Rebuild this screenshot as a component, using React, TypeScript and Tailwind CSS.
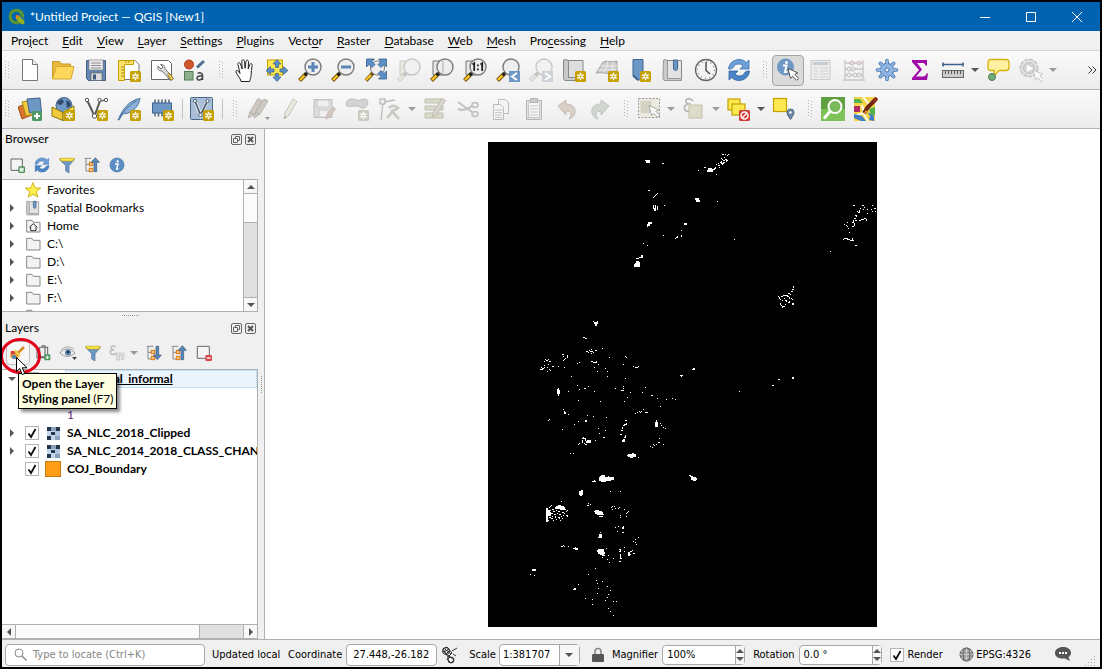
import type { ReactNode } from "react";

type Rect = [number, number, number?, number?];

/* ---------- small shared pieces ---------- */

function Svg({ children, size = 24, className = "" }: { children: ReactNode; size?: number; className?: string }) {
  return (
    <svg width={size} height={size} viewBox="0 0 24 24" fill="none" className={`shrink-0 ${className}`} aria-hidden="true">
      {children}
    </svg>
  );
}

function Star({ x = 13, y = 13, off = false }: { x?: number; y?: number; off?: boolean }) {
  return (
    <g transform={`translate(${x} ${y})`}>
      <rect width="11" height="11" rx="1.5" fill={off ? "#c9c9bd" : "#c4a000"} />
      <path d="M5.5 1.8v7.4M2.3 3.6l6.4 3.8M2.3 7.4l6.4-3.8" stroke="#fff" strokeWidth="1.6" />
      <circle cx="5.5" cy="5.5" r="1" fill={off ? "#c9c9bd" : "#c4a000"} />
    </g>
  );
}

function Pointer({ x, y, fill = "#fff", stroke = "#555" }: { x: number; y: number; fill?: string; stroke?: string }) {
  return (
    <path
      transform={`translate(${x} ${y})`}
      d="M0 0l2.5 10 2.3-2.2 3.8 4 2-2-3.8-3.9 3-1.6z"
      fill={fill}
      stroke={stroke}
      strokeLinejoin="round"
    />
  );
}

function Lens({ children, off = false, back = false }: { children?: ReactNode; off?: boolean; back?: boolean }) {
  return (
    <Svg>
      {back && <path d="M3 3h10v14H3z" fill={off ? "#e9e9dd" : "#e6e6e6"} stroke={off ? "#ccc" : "#777"} />}
      <path d="M8.5 15.5L1.5 22.500" stroke={off ? "#ccc" : "#6b5312"} strokeWidth="4" />
      <path d="M7 17L2 22" stroke={off ? "#e8e8e0" : "#ffc423"} strokeWidth="2.400" />
      <path d="M9.500 14.500l-3 3" stroke={off ? "#c4c4c4" : "#222"} strokeWidth="3" />
      <circle cx="15" cy="9" r="8" fill={off ? "#f1f1f1" : "#eee"} stroke={off ? "#c8c8c8" : "#7b7d7c"} strokeWidth="1.4" />
      {children}
    </Svg>
  );
}

function Sync({ size = 24 }: { size?: number }) {
  return (
    <Svg size={size}>
      <path d="M1.500 11C2 5 7 1.500 12 1.500c3 0 5.500 1 7.200 3L22 2v9h-9l3-3c-2.500-3-8-2.500-9.500 1-.8 1.700-2.500 2-5 2z" fill="#6d9fd6" stroke="#3d74b5" strokeWidth=".8" />
      <path d="M22.500 13c-.5 6-5.500 9.500-10.500 9.500-3 0-5.500-1-7.200-3L2 22v-9h9l-3 3c2.500 3 8 2.500 9.500-1 .8-1.700 2.500-2 5-2z" fill="#4a85c6" stroke="#2f65a5" strokeWidth=".8" />
    </Svg>
  );
}

function Info({ size = 24 }: { size?: number }) {
  return (
    <Svg size={size}>
      <circle cx="12" cy="12" r="10.500" fill="#5c8dc4" stroke="#45719f" />
      <circle cx="13" cy="6.500" r="1.800" fill="#fff" />
      <path d="M9 10.500h4.500L11.500 18h2.500" stroke="#fff" strokeWidth="2.200" />
    </Svg>
  );
}

function Funnel() {
  return (
    <Svg size={16}>
      <path d="M1 4h22l-8 9v11l-5-3v-8z" fill="#6d97c4" stroke="#4b6f9b" />
      <path d="M1 2h22l-2 4H3z" fill="#fce94f" stroke="#c4a000" />
    </Svg>
  );
}

function TreeArrows({ up = false }: { up?: boolean }) {
  return (
    <Svg size={16}>
      <path d="M1 2h10M3 2v19h6M3 11h6" stroke="#888" strokeWidth="1.500" />
      <rect x="8" y="8" width="5" height="5" fill="#f6c48a" stroke="#e07a10" strokeWidth="1.500" />
      <rect x="8" y="17" width="5" height="5" fill="#f6c48a" stroke="#e07a10" strokeWidth="1.500" />
      {up ? (
        <path d="M17 1l6 7h-4v14h-4V8h-4z" fill="#5a86b8" stroke="#355880" />
      ) : (
        <path d="M17 22l6-7h-4V2h-4v13h-4z" fill="#5a86b8" stroke="#355880" />
      )}
    </Svg>
  );
}

function Tri({ dir = "down", color = "#555" }: { dir?: "down" | "up" | "left" | "right"; color?: string }) {
  const d = { down: "M0 2h8L4 6z", up: "M0 6h8L4 2z", left: "M6 0v8L2 4z", right: "M2 0v8l4-4z" }[dir];
  return (
    <svg width="8" height="8" viewBox="0 0 8 8" className="shrink-0" aria-hidden="true">
      <path d={d} fill={color} />
    </svg>
  );
}

/* ---------- toolbar icons ---------- */

const NewFile = (
  <Svg>
    <path d="M4.500 1.500h10l5 5v16h-15z" fill="#fff" stroke="#777" />
    <path d="M14.500 1.500v5h5" fill="#eee" stroke="#777" />
  </Svg>
);
const OpenFolder = (
  <Svg>
    <path d="M1.500 20.500v-17h7l2 2.500h9v3" fill="#e8b93c" stroke="#c79a2a" />
    <path d="M1.500 21L5.500 8.500h17.500L20 21z" fill="#ffd75a" stroke="#d9a92f" />
  </Svg>
);
const Save = (
  <Svg>
    <path d="M2.500 2.500h19v20h-17l-2-2z" fill="#6488b3" stroke="#435f80" />
    <rect x="5" y="2" width="14" height="10" fill="#eee" stroke="#777" strokeWidth=".6" />
    <path d="M7 5h10M7 7.500h10M7 10h10" stroke="#888" />
    <rect x="7" y="15" width="11" height="7.500" fill="#ddd" stroke="#555" strokeWidth=".6" />
    <rect x="9" y="16.500" width="3" height="5" fill="#3d5b80" />
  </Svg>
);
const NewLayout = (
  <Svg>
    <path d="M4 2.500h14l4 4v15H4z" fill="#fff" stroke="#777" />
    <path d="M1.500 2.500h15v4h-9v16h-6z" fill="#fce26a" stroke="#c4a000" />
    <path d="M4 9h3M4 12h3M4 15h3M4 18h3M9 3v2M12 3v2" stroke="#a68800" />
    <Star />
  </Svg>
);
const LayoutManager = (
  <Svg>
    <path d="M1.500 2.500h17l3 3v16h-20z" fill="#fff" stroke="#666" />
    <path d="M8 8c-1 3 1 5 4 5l8.500 9.500 2.500-2-8-10c0-3-2-4.500-4.500-4l2.500 2.500-2 2z" fill="#ddd" stroke="#777" />
    <path d="M17.500 16.500l3.500 6 2.500-2-4.500-5.500z" fill="#f2cf65" stroke="#8d7427" />
  </Svg>
);
const StyleManager = (
  <Svg>
    <circle cx="6" cy="6.500" r="4.500" fill="#d2562b" stroke="#a33b18" />
    <path d="M14 9.500L21 3" stroke="#4f6f94" strokeWidth="3" />
    <rect x="1.500" y="13.500" width="8.500" height="8.500" fill="#8fb08c" stroke="#527c50" />
    <path d="M14.500 15.500c1.500-1 5-1 5 1.500v5M19.500 18c-3-.5-5.500.5-5.500 2.300 0 2.200 4 2.200 5.500-.3" stroke="#444" strokeWidth="1.500" />
  </Svg>
);
const Hand = (
  <Svg>
    <path
      d="M9 23.500c-.5-4-3.500-5-5-9.500-.5-1.600 1.500-2 2.300-.8L8 15.500 6 6.500c-.4-2 1.800-2.500 2.400-.7L10.200 11 9.800 3.300c0-2 2.500-2 2.700 0l.6 7L14 3.500c.3-1.900 2.600-1.600 2.500.3L16.200 11l1.600-4.500c.7-1.700 2.700-1 2.300.9-.7 3.500-.8 7-1 10-.2 2.600-1.100 3.600-1.400 6.100z"
      fill="#fff"
      stroke="#222"
      strokeLinejoin="round"
    />
  </Svg>
);
const PanSelection = (
  <Svg>
    <rect x="2.500" y="2" width="15" height="15" fill="#fce94f" stroke="#c4a000" />
    <path
      d="M12 1.500l4 4.500h-2.500v3.500h-3V6H8zM12 23.500l4-4.500h-2.500v-3.500h-3V19H8zM1 12.500l4.500-4V11H9v3H5.500v2.500zM23 12.500l-4.500-4V11H15v3h3.500v2.500z"
      fill="#5a8fc8"
      stroke="#3a608c"
      strokeWidth=".7"
    />
  </Svg>
);
const ZoomIn = (
  <Lens>
    <path d="M15 4v10M10 9h10" stroke="#5b86b8" strokeWidth="3" />
  </Lens>
);
const ZoomOut = (
  <Lens>
    <path d="M10 9h10" stroke="#5b86b8" strokeWidth="3" />
  </Lens>
);
const ZoomFull = (
  <Svg>
    <path d="M9 15l-7 7.500" stroke="#6b5312" strokeWidth="4" />
    <path d="M7 17l-5 5" stroke="#ffc423" strokeWidth="2.400" />
    <circle cx="13.500" cy="10" r="7" fill="#eee" stroke="#777" />
    <path
      d="M2.500 1h8L8 3.500l3 3-3 3-3-3L2.500 9zM22.500 1h-8L17 3.500l-3 3 3 3 3-3L22.500 9zM22.500 21h-8l2.500-2.500-3-3 3-3 3 3 2.500-2.500z"
      fill="#5a8fc8"
      stroke="#3a608c"
      strokeWidth=".8"
    />
  </Svg>
);
const ZoomSelection = <Lens off back />;
const ZoomLayer = (
  <Lens back>
    <path d="M13 3v12" stroke="#aaa" />
  </Lens>
);
const ZoomNative = (
  <Lens back>
    <path d="M9.500 6.500l1.700-1.200V13M17.500 6.500l1.700-1.200V13" stroke="#222" strokeWidth="1.800" />
    <path d="M14 6.500h1.800v1.800H14zM14 10.500h1.800v1.800H14z" fill="#222" />
  </Lens>
);
const ZoomLast = (
  <Lens>
    <rect x="13" y="13" width="11" height="11" fill="#6d97c4" />
    <path d="M21 15l-5 3.500 5 3.500" stroke="#fff" strokeWidth="2" />
  </Lens>
);
const ZoomNext = (
  <Lens off>
    <rect x="13" y="13" width="11" height="11" fill="#ccd2d8" />
    <path d="M16 15l5 3.500-5 3.500" stroke="#fff" strokeWidth="2" />
  </Lens>
);
const NewMapView = (
  <Svg>
    <path d="M5 2.500h16v17H5z" fill="#dedede" stroke="#888" />
    <path d="M1.500 2c3-1 5 0 5 2v15.500H21v3H4c-2 0-2.500-1-2.500-3z" fill="#c9c9c9" stroke="#888" />
    <Star />
  </Svg>
);
const New3d = (
  <Svg>
    <path d="M1 15C4 11 6 7 8 4c4-2 8 1 14-1v12c-7 2-12-1-21 0z" fill="#ccc" stroke="#a5a5a5" />
    <path d="M6 8c6-1 10 1.500 16-.5M3.500 12c7-1 11 1 18-1M13 3.500c-1 4-2 7-4 11M18 4l-2 12" stroke="#eee" />
    <Star />
  </Svg>
);
const NewBookmark = (
  <Svg>
    <path d="M5 1.500h10v17l-4 4-6-5z" fill="#6d97c4" stroke="#3f648e" />
    <path d="M5 17.500l5 4.500" stroke="#3f648e" strokeWidth="2" />
    <Star x={12} />
  </Svg>
);
const Bookmarks = ({ size = 24 }: { size?: number }) => (
  <Svg size={size}>
    <path d="M3.500 2.500h17v18h-17z" fill="#e2e2e2" stroke="#888" />
    <path d="M2.500 2c2-1 4 0 4 2v16.500h14v2H4c-1.500 0-2-1-2-3z" fill="#cacaca" stroke="#999" />
    <path d="M12.500 2h4v9l-2 2-2-2z" fill="#6d97c4" stroke="#3f648e" />
  </Svg>
);
const Clock = (
  <Svg>
    <circle cx="12" cy="12" r="10.500" fill="#f4f4f4" stroke="#666" strokeWidth="1.300" />
    <circle cx="12" cy="12" r="8.500" stroke="#888" strokeWidth="1.500" strokeDasharray="1 3.450" />
    <path d="M12 4v8.500l4 3.500" stroke="#444" strokeWidth="1.400" />
  </Svg>
);
const Identify = (
  <Svg>
    <circle cx="9.500" cy="9" r="8.500" fill="#6d97c4" />
    <circle cx="10.500" cy="4.500" r="1.500" fill="#fff" />
    <path d="M7 7.500h3.500L9 14h2.500" stroke="#fff" strokeWidth="2" />
    <Pointer x={12} y={10.500} />
  </Svg>
);
const Table = (
  <Svg>
    <rect x="2" y="2.500" width="19" height="19" fill="#ececec" stroke="#ccc" />
    <path d="M4 5.500h15" stroke="#c4cdd6" strokeWidth="3" />
    <path d="M5 10h4M5 13h4M5 16h4M5 19h4M11 10h8M11 13h8M11 16h8M11 19h8" stroke="#d0d0d0" />
  </Svg>
);
const Abacus = (
  <Svg>
    <path d="M3 2v19M21 2v19M1 22h22M3 5h18M3 11h18M3 17h18" stroke="#c6c6c6" strokeWidth="1.300" />
    <g fill="#eee" stroke="#c0c0c0">
      <circle cx="10" cy="5" r="2" fill="#efd9d9" />
      <circle cx="17" cy="5" r="2" fill="#efd9d9" />
      <circle cx="7" cy="11" r="2" />
      <circle cx="11" cy="11" r="2" />
      <circle cx="7" cy="17" r="2" />
      <circle cx="13" cy="17" r="2" />
      <circle cx="17" cy="17" r="2" />
    </g>
  </Svg>
);
const Gear = (
  <Svg>
    <g stroke="#4a78b0" strokeWidth="3.600" strokeLinecap="round">
      <path d="M12 2.500v19M2.500 12h19M5.300 5.300l13.400 13.400M18.700 5.300L5.300 18.700" />
    </g>
    <circle cx="12" cy="12" r="7.200" fill="#4a78b0" />
    <g stroke="#8db4e2" strokeWidth="2" strokeLinecap="round">
      <path d="M12 2.500v19M2.500 12h19M5.300 5.300l13.400 13.400M18.700 5.300L5.300 18.700" />
    </g>
    <circle cx="12" cy="12" r="6.200" fill="#8db4e2" />
    <circle cx="12" cy="12" r="2" fill="#eee" stroke="#4a78b0" />
  </Svg>
);
const Sigma = (
  <Svg>
    <path d="M4 2h15v5.500h-1.500C17 5.500 16 5 14 5H9l5 6.500L8 18.500h7c2 0 3-1 3.500-3H20L19 22H4v-2l7-8-7-8z" fill="#a00aa8" />
  </Svg>
);
const Ruler = (
  <Svg>
    <path d="M2 6.500h20M2 4.500v4M22 4.500v4" stroke="#3d5f88" strokeWidth="1.600" />
    <rect x="1.500" y="12.500" width="21" height="7" fill="#ccc" stroke="#666" />
    <path d="M4.500 13v3M7.500 13v3M10.500 13v3M13.500 13v3M16.500 13v3M19.500 13v3" stroke="#555" />
  </Svg>
);
const MapTips = (
  <Svg>
    <path d="M5 1.500h15c2 0 3 1 3 3v5c0 2-1 3-3 3h-7L7 19l1.500-6.500H5c-2 0-3-1-3-3v-5c0-2 1-3 3-3z" fill="#fdf0a0" stroke="#d4b106" strokeWidth="1.300" />
    <circle cx="6" cy="19" r="3.500" fill="#6fae7a" stroke="#4a7c52" />
  </Svg>
);
const Actions = (
  <Svg>
    <circle cx="10" cy="10" r="8.500" fill="#e6e6e6" stroke="#c8c8c8" strokeWidth="2" strokeDasharray="4 1" />
    <circle cx="10" cy="10" r="5.500" fill="#d6d6d6" stroke="#bbb" />
    <path d="M8 7l6 3.500-6 3.500z" fill="#fff" />
    <Pointer x={14} y={12} fill="#f8f8f8" stroke="#c4c4c4" />
  </Svg>
);

/* second row */
const DataSource = (
  <Svg>
    <path d="M0 10l9-4 5 12-10 4z" fill="#d8742f" stroke="#a3521a" />
    <path d="M4 5l10-2 4 14-10 2z" fill="#f0c93c" stroke="#a98a10" />
    <path d="M9 2l13-1 1.500 14-12 1z" fill="#6d97c4" stroke="#3f648e" />
    <rect x="14" y="14" width="10" height="10" rx="1.500" fill="#4f9a63" />
    <path d="M19 16v6M16 19h6" stroke="#fff" strokeWidth="2" />
  </Svg>
);
const Geopackage = (
  <Svg>
    <circle cx="13" cy="8.500" r="8" fill="#6d97c4" stroke="#3f5f83" />
    <path d="M7 4l4-2 2 3-3 3-4-1zM15 3l4 2 1 4-4 2z" fill="#324d6c" />
    <path d="M1 10l11 5.500v8L1 19z" fill="#f0c93c" stroke="#8b7209" />
    <path d="M12 15.500L23 9v9l-11 5.500z" fill="#fce94f" stroke="#8b7209" />
    <Star />
  </Svg>
);
const Shapefile = (
  <Svg>
    <path d="M3 3l7.500 16L16 4" stroke="#555" strokeWidth="2" />
    <path d="M16 4c2 1 4-2 6-1" stroke="#555" strokeWidth="1.300" />
    <g fill="#fff" stroke="#555">
      <circle cx="3" cy="3" r="1.700" />
      <circle cx="15.500" cy="3" r="1.700" />
      <circle cx="22" cy="3" r="1.700" />
      <circle cx="10.500" cy="19" r="2.200" />
    </g>
    <Star />
  </Svg>
);
const Spatialite = (
  <Svg>
    <path d="M1 23C6 11 13 3 23 1.500 22 7 19 13 11 16c-3 1-5 0-6 2l-3 5z" fill="#8cb0d8" stroke="#47719f" />
    <path d="M3 20C8 12 14 7 20 3.500" stroke="#47719f" />
    <Star />
  </Svg>
);
const TempLayer = (
  <Svg>
    <path d="M5 2.500v17M8.500 2.500v17M12 2.500v17M15.500 2.500v17M19 2.500v17" stroke="#567" strokeWidth="1.500" />
    <rect x="2.500" y="6" width="19" height="10" fill="#6d97c4" stroke="#3f648e" />
    <Star />
  </Svg>
);
const VirtualLayer = (
  <Svg>
    <rect x=".5" y=".500" width="22" height="22" rx="1" fill="#a9bfd8" stroke="#4b6787" />
    <path d="M5 4l5.500 14L17 5" stroke="#e8eef5" strokeWidth="3.500" />
    <path d="M5 4l5.500 14L17 5" stroke="#4b5d72" strokeWidth="1.700" />
    <g fill="#fff" stroke="#4b5d72">
      <circle cx="5" cy="4" r="1.600" />
      <circle cx="17.500" cy="4" r="1.600" />
      <circle cx="10.500" cy="18" r="1.800" />
    </g>
    <Star />
  </Svg>
);
const Pencils = (
  <Svg>
    <path d="M2 21l2-6L12 1.500l4 2L8 18zM8 21l2-6 8-13 4 2-8 13z" fill="#cfc9c4" stroke="#b9b4ae" />
    <path d="M4 15l4 3M10 15l4 3" stroke="#b0aaa5" />
    <path d="M19 20h5l-2.500 3z" fill="#999" />
  </Svg>
);
const Pencil = (
  <Svg>
    <path d="M5 22l1-6L14 2l4 2.500L10 18z" fill="#e8e8dc" stroke="#c6c6bc" />
    <path d="M5 22l3-2-2-1z" fill="#aaa" />
  </Svg>
);
const SaveEdits = (
  <Svg>
    <rect x="2" y="2.500" width="18" height="18" fill="#dcdcdc" stroke="#c0c0c0" />
    <path d="M5 3h12v7H5zM7 13h9v7H7z" fill="#efefef" stroke="#ccc" />
    <path d="M14 22l1-4 6-8 2.500 2-6 8z" fill="#d9c9c5" stroke="#c3b5b1" />
  </Svg>
);
const AddPolygon = (
  <Svg>
    <path d="M1 7c0-5 6-6 10-4 3 1 5 0 8-1 5-1 5 7 0 9-3 1-4-2-7-2-5 0-11 2-11-2z" fill="#d3d3d3" stroke="#bdbdbd" />
    <Star off />
  </Svg>
);
const VertexTool = (
  <Svg>
    <path d="M3 23L5 5l12-2" stroke="#bbb" strokeWidth="1.300" />
    <rect x="2" y="2" width="5" height="5" fill="#eee" stroke="#aaa" />
    <path d="M9 21l8-9M11 11c2-3 6-3 9 0l-3 2M13 13l8 9" stroke="#c9c9c2" strokeWidth="2.600" />
  </Svg>
);
const ModifyAttrs = (
  <Svg>
    <path d="M2 2h18v4H2zM2 9h18v4H2zM2 16h18v5H2z" fill="#dadacb" stroke="#bfbfae" />
    <path d="M9 20l2-6L19 1.500l3.500 2L14 17z" fill="#dcd6d2" stroke="#bfb9b4" />
  </Svg>
);
const Cut = (
  <Svg>
    <path d="M2 5l14 10M2 12c5 2 9 1 14-3" stroke="#c2c2c2" strokeWidth="2" />
    <ellipse cx="19" cy="17" rx="3" ry="2.300" stroke="#c2c2c2" strokeWidth="1.700" />
    <ellipse cx="19" cy="8" rx="3" ry="2.300" stroke="#c2c2c2" strokeWidth="1.700" />
  </Svg>
);
const Copy = (
  <Svg>
    <path d="M9.500 2.500h7l3 3v11h-10z" fill="#f4f4f4" stroke="#bcbcbc" />
    <path d="M4.500 7.500h7l3 3v12h-10z" fill="#f4f4f4" stroke="#bcbcbc" />
    <path d="M6 13h7M6 15.500h7M6 18h7M6 20.500h7" stroke="#c8c8c8" />
  </Svg>
);
const Paste = (
  <Svg>
    <path d="M4.500 3.500h15v19h-15z" fill="#e2e2dc" stroke="#b5b5b5" />
    <path d="M7.500 5.500h9l1 1v14h-11v-15z" fill="#f6f6f6" stroke="#c4c4c4" />
    <path d="M8.500 1.500h7v4h-7z" fill="#ccc" stroke="#b5b5b5" />
    <path d="M8 9h8M8 12h8M8 15h8M8 18h8" stroke="#c8c8c8" />
  </Svg>
);
const Undo = ({ flip = false }: { flip?: boolean }) => (
  <Svg className={flip ? "-scale-x-100" : ""}>
    <path d="M3 9l8-6v4c7 0 10 4 9 9-.5 3-3 5-6 6 3-4 3-8-3-8v4z" fill={flip ? "#d0d6d0" : "#dacfc6"} stroke={flip ? "#bec4be" : "#c9bdb3"} />
  </Svg>
);
const SelectArea = (
  <Svg>
    <rect x="1.500" y="1.500" width="21" height="19" fill="#eceadf" stroke="#999" strokeDasharray="2 1.500" />
    <rect x="3.500" y="4" width="11" height="12" fill="#d4d2c3" />
    <Pointer x={12} y={8.500} fill="#fafafa" stroke="#aaa" />
  </Svg>
);
const SelectExpr = (
  <Svg>
    <path d="M11 4C8 0 3 2 4 5c.5 2 3 2 4.500 1.700C4 7 1.500 9 2.500 12c1 3 6 3 8.500 0" stroke="#bbb" strokeWidth="1.800" />
    <rect x="7" y="8" width="13" height="13" fill="#dddcc8" stroke="#c2c1ac" />
  </Svg>
);
const Deselect = (
  <Svg>
    <rect x="1" y="2" width="12" height="11" fill="#fce94f" stroke="#c4a000" strokeWidth="1.200" />
    <rect x="5" y="7" width="13" height="11" fill="#fce94f" stroke="#c4a000" strokeWidth="1.200" />
    <rect x="12" y="13" width="11" height="11" rx="1.500" fill="#d33a3a" />
    <circle cx="17.500" cy="18.500" r="3.500" stroke="#fff" strokeWidth="1.500" />
    <path d="M15 21l5-5" stroke="#fff" strokeWidth="1.500" />
  </Svg>
);
const SelectLocation = (
  <Svg>
    <rect x="1.500" y="1.500" width="13" height="13" fill="#fce94f" stroke="#c4a000" strokeWidth="1.200" />
    <path d="M18.500 22.500c-2.500-4-3.500-5-3.500-7a3.500 3.500 0 017 0c0 2-1 3-3.500 7z" fill="#6d8aa6" stroke="#50697f" />
    <circle cx="18.500" cy="15.500" r="1.200" fill="#fff" />
  </Svg>
);
const SearchPlugin = (
  <Svg>
    <rect width="24" height="24" fill="#7fc257" />
    <path d="M0 0h24v12H0z" fill="#5f9f40" />
    <circle cx="14" cy="9.500" r="6.500" fill="#7cb85c" stroke="#fff" strokeWidth="2" />
    <path d="M9 14.500L3 21.500" stroke="#fff" strokeWidth="3" />
  </Svg>
);
const OsmPlugin = (
  <Svg>
    <rect width="21" height="24" fill="#f4d548" />
    <path d="M0 2h6l3 4H0zM15 12l6-2v8l-4 1z" fill="#56b04c" />
    <path d="M0 9h6v6H0z" fill="#b02864" />
    <path d="M9 0l6 7 4-4M0 19l9-3 5 8M8 8l2 8" stroke="#fff" strokeWidth="1.800" />
    <path d="M0 17l8 2 4 5H7l-7-3zM13 15l3 4-1 4 5 1v-5z" fill="#3f7ecb" />
    <path d="M10 16l4-6 7-7" stroke="#6d2413" strokeWidth="4" />
    <path d="M19 5l4-4" stroke="#8c3117" strokeWidth="4" />
    <path d="M9 17l3-4 2 2z" fill="#e6972b" />
  </Svg>
);

/* ---------- toolbars ---------- */

type Item =
  | "handle"
  | "sep"
  | { name: string; icon: ReactNode; menu?: boolean; dim?: boolean; active?: boolean };

const mainTools: Item[] = [
  { name: "New Project", icon: NewFile },
  { name: "Open Project", icon: OpenFolder },
  { name: "Save Project", icon: Save },
  { name: "New Print Layout", icon: NewLayout },
  { name: "Layout Manager", icon: LayoutManager },
  { name: "Style Manager", icon: StyleManager },
  "handle",
  { name: "Pan Map", icon: Hand },
  { name: "Pan to Selection", icon: PanSelection },
  { name: "Zoom In", icon: ZoomIn },
  { name: "Zoom Out", icon: ZoomOut },
  { name: "Zoom Full", icon: ZoomFull },
  { name: "Zoom to Selection", icon: ZoomSelection },
  { name: "Zoom to Layer", icon: ZoomLayer },
  { name: "Zoom to Native Resolution", icon: ZoomNative },
  { name: "Zoom Last", icon: ZoomLast },
  { name: "Zoom Next", icon: ZoomNext },
  { name: "New Map View", icon: NewMapView },
  { name: "New 3D Map View", icon: New3d },
  { name: "New Spatial Bookmark", icon: NewBookmark },
  { name: "Show Spatial Bookmarks", icon: <Bookmarks /> },
  { name: "Temporal Controller", icon: Clock },
  { name: "Refresh", icon: <Sync /> },
  "handle",
  { name: "Identify Features", icon: Identify, active: true },
  { name: "Open Attribute Table", icon: Table },
  { name: "Field Calculator", icon: Abacus },
  { name: "Toolbox", icon: Gear },
  { name: "Statistical Summary", icon: Sigma },
  { name: "Measure", icon: Ruler, menu: true },
  { name: "Map Tips", icon: MapTips },
  { name: "Run Feature Action", icon: Actions, menu: true, dim: true },
];

const editTools: Item[] = [
  { name: "Data Source Manager", icon: DataSource },
  { name: "New GeoPackage Layer", icon: Geopackage },
  { name: "New Shapefile Layer", icon: Shapefile },
  { name: "New SpatiaLite Layer", icon: Spatialite },
  { name: "New Temporary Scratch Layer", icon: TempLayer },
  "sep",
  { name: "New Virtual Layer", icon: VirtualLayer },
  "sep",
  "handle",
  { name: "Current Edits", icon: Pencils },
  { name: "Toggle Editing", icon: Pencil },
  { name: "Save Layer Edits", icon: SaveEdits },
  { name: "Add Polygon Feature", icon: AddPolygon },
  { name: "Vertex Tool", icon: VertexTool, menu: true, dim: true },
  { name: "Modify Attributes", icon: ModifyAttrs },
  { name: "Cut Features", icon: Cut },
  { name: "Copy Features", icon: Copy },
  { name: "Paste Features", icon: Paste },
  { name: "Undo", icon: <Undo /> },
  { name: "Redo", icon: <Undo flip /> },
  "handle",
  { name: "Select Features", icon: SelectArea, menu: true, dim: true },
  { name: "Select by Expression", icon: SelectExpr, menu: true, dim: true },
  { name: "Deselect Features", icon: Deselect, menu: true },
  { name: "Select by Location", icon: SelectLocation },
  "handle",
  { name: "Search Layers", icon: SearchPlugin },
  { name: "OSM Place Search", icon: OsmPlugin },
];

function Handle() {
  return (
    <div className="flex w-[15px] shrink-0 justify-center pl-1">
      <svg width="5" height="18" aria-hidden="true">
        {[0, 3, 6, 9, 12, 15].map((y) => (
          <path key={y} d={`M0 ${y}h1v1h-1zM3 ${y + 1}h1v1h-1z`} fill="#b5b5b5" />
        ))}
      </svg>
    </div>
  );
}

function Toolbar({ items, label, overflow = false }: { items: Item[]; label: string; overflow?: boolean }) {
  return (
    <div
      role="toolbar"
      aria-label={label}
      className="flex h-[39px] shrink-0 items-center gap-px overflow-hidden border-b border-[#b4b4b4] bg-linear-to-b from-[#fafafa] to-[#ececec] pr-[3px]"
    >
      <div className="-ml-1">
        <Handle />
      </div>
      {items.map((item, i) => {
        if (item === "handle") return <Handle key={i} />;
        if (item === "sep")
          return (
            <div key={i} className="flex w-1.5 shrink-0 justify-center">
              <div className="h-5 w-px bg-[#c4c4c4]" />
            </div>
          );
        return (
          <div key={item.name} className="flex shrink-0 items-center">
            <button
              aria-label={item.name}
              className={`flex h-[31px] w-8 items-center justify-center rounded-sm border ${
                item.active ? "border-[#a5a5a5] bg-[#dadada]" : "border-transparent"
              }`}
            >
              {item.icon}
            </button>
            {item.menu && (
              <button aria-label={`${item.name} options`} className="flex h-6 w-3 items-center justify-center">
                <Tri color={item.dim ? "#9a9a9a" : "#555"} />
              </button>
            )}
          </div>
        );
      })}
      {overflow && (
        <button aria-label="More tools" className="ml-auto flex h-6 items-center">
          <svg width="9" height="8" fill="none" stroke="#333" aria-hidden="true">
            <path d="M.500 .500L4 4 .500 7.500M4.500 .500L8 4 4.500 7.500" />
          </svg>
        </button>
      )}
    </div>
  );
}

/* ---------- docks ---------- */

function PanelTitle({ title }: { title: string }) {
  return (
    <div className="flex h-5 shrink-0 items-center gap-[3px] pr-[2px] pl-[3px]">
      <h2 className="grow">{title}</h2>
      <button aria-label={`Float ${title}`}>
        <svg width="11" height="11" fill="none" stroke="#666" className="block" aria-hidden="true">
          <rect x=".5" y=".5" width="10" height="10" rx="1.500" />
          <path d="M4.500 4V2.500h4v4H7M2.500 4.500h4v4h-4z" />
        </svg>
      </button>
      <button aria-label={`Close ${title}`}>
        <svg width="11" height="11" fill="none" stroke="#666" className="block" aria-hidden="true">
          <rect x=".5" y=".5" width="10" height="10" rx="1.500" />
          <path d="M3 3l5 5M8 3L3 8" strokeWidth="2" stroke="#555" />
        </svg>
      </button>
    </div>
  );
}

function SmallButton({ name, children }: { name: string; children: ReactNode }) {
  return (
    <button aria-label={name} className="flex size-6 shrink-0 items-center justify-center">
      {children}
    </button>
  );
}

const AddBox = (
  <Svg size={16}>
    <path d="M3 3h17v17H3z" fill="#f4f4f4" stroke="#666" strokeWidth="1.500" />
    <rect x="15" y="15" width="8" height="8" rx="1" fill="#dff0df" stroke="#4f8f5a" strokeWidth="2" />
  </Svg>
);
const RemoveBox = (
  <Svg size={16}>
    <path d="M2 2h18v18H2z" fill="#f4f4f4" stroke="#666" strokeWidth="1.500" />
    <rect x="14" y="15" width="10" height="9" rx="2" fill="#d9434b" />
    <path d="M16 19.500h6" stroke="#fff" strokeWidth="2" />
  </Svg>
);
const FolderSmall = ({ home = false }: { home?: boolean }) => (
  <Svg size={16}>
    <path d="M2.500 21V3.500h8l2 3h10V21z" fill="#f3f3f3" stroke="#808080" strokeWidth="1.400" />
    {home && <path d="M6.500 14l6-5.500 6 5.500M8.500 13v6h8v-6" stroke="#333" strokeWidth="1.500" />}
  </Svg>
);
const FavoriteStar = (
  <Svg size={16}>
    <path d="M12 1l3.200 7.800 8.300.5-6.400 5.300 2.100 8.200-7.200-4.500-7.200 4.500 2.100-8.200L.500 9.300l8.300-.5z" fill="#fdf04c" stroke="#c9a80c" strokeWidth="1.300" />
  </Svg>
);
const Raster = (
  <svg width="13" height="13" viewBox="0 0 13 13" aria-hidden="true">
    <rect width="13" height="13" fill="#c3d6ec" />
    <path d="M0 0h4v4H0zM9 0h4v4H9zM4 5h4v3H4zM0 9h4v4H0z" fill="#26364c" />
    <path d="M4 0h5v4H4zM8 9h5v4H8z" fill="#8ba1be" />
    <path d="M8 4h5v5H8z" fill="#b1c6e0" />
  </svg>
);

// the last folder is scrolled almost out of the list
const browserItems = [
  { label: "Favorites", icon: FavoriteStar, leaf: true },
  { label: "Spatial Bookmarks", icon: <Bookmarks size={16} /> },
  { label: "Home", icon: <FolderSmall home /> },
  { label: "C:\\", icon: <FolderSmall /> },
  { label: "D:\\", icon: <FolderSmall /> },
  { label: "E:\\", icon: <FolderSmall /> },
  { label: "F:\\", icon: <FolderSmall /> },
  { label: "", icon: <FolderSmall /> },
];

function BrowserPanel() {
  return (
    <section className="flex h-[183px] shrink-0 flex-col">
      <PanelTitle title="Browser" />
      <div className="flex h-[30px] shrink-0 items-center gap-px pt-0.5 pl-[3px]">
        <SmallButton name="Add Selected Layers">{AddBox}</SmallButton>
        <SmallButton name="Refresh"><Sync size={16} /></SmallButton>
        <SmallButton name="Filter Browser"><Funnel /></SmallButton>
        <SmallButton name="Collapse All"><TreeArrows up /></SmallButton>
        <SmallButton name="Properties"><Info size={16} /></SmallButton>
      </div>
      <div className="flex min-h-0 grow border border-l-0 border-[#b0b0b0] bg-white">
        <ul className="grow overflow-hidden pt-px">
          {browserItems.map((item) => (
            <li key={item.label} className="flex h-[18px] items-center pl-1.5">
              <span className="flex w-[17px]">{!item.leaf && <Tri dir="right" />}</span>
              {item.icon}
              <span className="pl-1.5">{item.label}</span>
            </li>
          ))}
        </ul>
        <div className="flex w-3.5 shrink-0 flex-col border-l border-[#b0b0b0] bg-[#e0e0e0]">
          <button aria-label="Scroll up" className="flex h-3.5 shrink-0 items-center justify-center border-b border-[#b0b0b0] bg-[#f7f7f7]">
            <Tri dir="up" />
          </button>
          <div className="h-[29px] border-b border-[#b0b0b0] bg-[#fbfbfb]" />
          <button aria-label="Scroll down" className="mt-auto flex h-3.5 shrink-0 items-center justify-center border-t border-[#b0b0b0] bg-[#f7f7f7]">
            <Tri />
          </button>
        </div>
      </div>
    </section>
  );
}

function Check({ id, label, hideLabel = false }: { id: string; label: string; hideLabel?: boolean }) {
  return (
    <span className="flex items-center gap-1">
      <span className="relative flex">
        <input
          id={id}
          type="checkbox"
          defaultChecked
          aria-label={hideLabel ? label : undefined}
          className="peer size-[14px] appearance-none border border-[#b5b5b5] bg-white"
        />
        <svg viewBox="0 0 14 14" fill="none" className="pointer-events-none absolute inset-0 hidden peer-checked:block" aria-hidden="true">
          <path d="M3.500 7.500l2.500 3.500L10.500 3" stroke="#111" strokeWidth="1.800" />
        </svg>
      </span>
      {!hideLabel && <label htmlFor={id}>{label}</label>}
    </span>
  );
}

function LayerRow({ name, icon, expand, current = false }: { name: string; icon: ReactNode; expand?: "right" | "down"; current?: boolean }) {
  return (
    <li className="flex h-[18px] items-center pl-1.5">
      <span className="flex w-[17px] shrink-0">{expand && <Tri dir={expand} />}</span>
      <Check id={name} label={name} hideLabel />
      <span className="flex w-[26px] shrink-0 items-center justify-center pl-0.5">{icon}</span>
      <span
        className={`h-full grow pl-[2px] leading-[18px] font-bold whitespace-nowrap ${
          current ? "bg-[#eaf4fc] underline shadow-[inset_0_0_0_1px_#c4e0f5]" : ""
        }`}
      >
        {name}
      </span>
    </li>
  );
}

function LayersPanel() {
  return (
    <section className="relative flex min-h-0 grow flex-col">
      <PanelTitle title="Layers" />
      <div className="flex h-[31px] shrink-0 items-center gap-px pb-0.5 pl-1">
        <button aria-label="Open the Layer Styling panel" className="flex h-6 w-6 shrink-0 items-center justify-center rounded-sm border border-[#c0c0c0] bg-[#f8f8f8]">
          <Svg size={16}>
            <path d="M1 10c5 0 6-3 10-1l4 6c-2 5-6 7-10 6-3-1-4-2-5-5z" fill="#e8a33b" />
            <path d="M1 9h6v5H2z" fill="#d33c3c" />
            <path d="M2 16l6-1 2 5-5 1z" fill="#4a84c9" />
            <path d="M12 12L21 3" stroke="#d88b28" strokeWidth="4" />
            <path d="M7 8l8 8" stroke="#f0cf4a" strokeWidth="3" />
          </Svg>
        </button>
        <SmallButton name="Add Group">
          <Svg size={16}>
            <path d="M7 3.500h12v14H7zM3 8v11h12M11 3v-2h4v18" stroke="#666" strokeWidth="1.600" />
            <rect x="14" y="14" width="9" height="9" rx="1" fill="#4f9a63" />
            <path d="M18.500 16v5M16 18.500h5" stroke="#fff" strokeWidth="1.500" />
          </Svg>
        </SmallButton>
        <SmallButton name="Manage Map Themes">
          <svg width="18" height="16" viewBox="0 0 18 16" fill="none" aria-hidden="true">
            <path d="M1 8c3-5 11-6 15 0-4 4-11 5-15 0z" fill="#e9eef3" stroke="#999" />
            <circle cx="9" cy="7.500" r="3" fill="#5a7ea6" />
            <circle cx="9" cy="7" r="1.200" fill="#1d2b3c" />
            <path d="M2 5c3-4 9-4 13-1" stroke="#aaa" />
            <path d="M13 12h5l-2.500 3z" fill="#444" />
          </svg>
        </SmallButton>
        <SmallButton name="Filter Legend"><Funnel /></SmallButton>
        <button aria-label="Filter Legend by Expression" className="flex h-6 shrink-0 items-center gap-1 px-[3px]">
          <svg width="17" height="18" viewBox="0 0 24 24" fill="none" aria-hidden="true">
            <path d="M9 4C7 1 2 2 3 5.500 3.500 7 5 7.500 7 7.500 3 7.500 1 9 2 12c1 3 6 3 8 0" stroke="#b5b5b5" strokeWidth="2" />
            <path d="M11 12h10v8l-3 2v-7h-3v7h-4z" fill="#e3e3e3" stroke="#bcbcbc" />
          </svg>
          <Tri color="#999" />
        </button>
        <SmallButton name="Expand All"><TreeArrows /></SmallButton>
        <SmallButton name="Collapse All"><TreeArrows up /></SmallButton>
        <SmallButton name="Remove Layer">{RemoveBox}</SmallButton>
      </div>
      <div className="flex min-h-0 grow flex-col border border-l-0 border-[#b0b0b0] bg-white">
        <ul className="min-h-0 grow overflow-hidden">
          <LayerRow name="residential_informal" icon={Raster} expand="down" current />
          <li className="h-[18px]" />
          <li className="h-[18px] pl-[65px] leading-[18px] text-[#6b1f7c]">1</li>
          <LayerRow name="SA_NLC_2018_Clipped" icon={Raster} expand="right" />
          <LayerRow name="SA_NLC_2014_2018_CLASS_CHANGE" icon={Raster} expand="right" />
          <LayerRow name="COJ_Boundary" icon={<span className="size-4 border border-[#c47a14] bg-[#ff9e17]" />} />
        </ul>
        <div className="flex h-3.5 shrink-0 border-t border-[#b0b0b0] bg-[#e0e0e0]">
          <button aria-label="Scroll left" className="flex w-3.5 items-center justify-center border-r border-[#b0b0b0] bg-[#f7f7f7]">
            <Tri dir="left" />
          </button>
          <div className="w-[184px] border-r border-[#b0b0b0] bg-[#fbfbfb]" />
          <button aria-label="Scroll right" className="ml-auto flex w-3.5 items-center justify-center border-l border-[#b0b0b0] bg-[#f7f7f7]">
            <Tri dir="right" />
          </button>
        </div>
      </div>

      {/* hovered styling button: ring, tooltip and mouse pointer */}
      <div className="pointer-events-none absolute top-5 -left-0.5 z-10 h-9 w-[41px] rounded-[50%] border-3 border-[#e2001a]" />
      <div
        role="tooltip"
        className="absolute top-[55px] left-4 z-10 border border-black bg-[#ffffe1] px-[3px] py-[2px] leading-[15px] whitespace-nowrap shadow-[3px_3px_3px_rgba(0,0,0,0.45)]"
      >
        <b>Open the Layer<br />Styling panel</b> (F7)
      </div>
      <svg width="13" height="20" className="pointer-events-none absolute top-[39px] left-3.5 z-20" aria-hidden="true">
        <path d="M.500 .500v14l3.300-3 2.400 6 2.600-1-2.500-5.700h4.700z" fill="#fff" stroke="#000" />
      </svg>
    </section>
  );
}

/* ---------- map ---------- */

const north: Rect[] = [
  [45, 20, 5], [46, 21, 4, 2], [62, 23, 2], [98, 30], [116, 34], [104, 27, 2], [108, 28, 4, 4], [107, 30, 6, 2], [112, 29, 3],
  [115, 27], [116, 24], [118, 23], [119, 25], [119, 27], [120, 22, 2], [121, 21], [122, 19], [122, 24], [123, 20, 2], [123, 22, 2],
  [125, 19, 2], [126, 21], [124, 17], [122, 14, 2], [125, 14], [127, 15], [126, 20, 2], [128, 14], [121, 18], [118, 25, 2], [121, 23, 3], [114, 28, 2],
  [48, 50, 2], [53, 57], [54, 56], [55, 55], [56, 54], [57, 53], [53, 65, 1, 4], [54, 68, 2, 3], [55, 65, 1, 3], [57, 66, 1, 4], [64, 65],
  [95, 58, 4, 2], [96, 60, 4, 2], [117, 61], [48, 82, 4, 2], [47, 84, 3, 2], [47, 86], [84, 83, 3, 2], [81, 90], [81, 95, 1, 2],
  [77, 96, 1, 2], [75, 98], [76, 97], [63, 95], [134, 99], [43, 103], [47, 105],
  [36, 118, 3], [39, 117, 3], [41, 115, 2, 3], [36, 121, 3], [36, 122, 4], [35, 123, 5], [34, 124, 6, 3],
  [230, 111], [255, 105, 2], [243, 99], [244, 98, 4], [247, 99, 3], [252, 98, 1, 2], [250, 100, 4],
  [253, 65, 2], [262, 65, 2], [264, 67], [260, 68], [259, 70, 1, 2], [258, 72, 2], [257, 71], [255, 75, 2], [256, 76], [254, 78, 2],
  [253, 80, 1, 2], [255, 80, 2], [252, 82, 2], [254, 83, 1, 3], [252, 86, 2], [247, 82], [246, 85], [248, 88], [244, 84], [249, 92], [247, 86],
  [261, 79, 3], [264, 78, 2], [259, 80, 2], [266, 79, 1, 2], [267, 69], [267, 73], [271, 69], [272, 65], [274, 68, 2], [272, 71], [275, 71], [263, 69],
  [193, 146, 1, 2], [192, 149, 2], [191, 151, 2], [190, 154], [188, 153, 2], [186, 155, 2], [183, 155, 3], [181, 156, 2], [178, 156], [179, 157, 1, 2],
  [180, 159], [187, 156, 2], [189, 157, 1, 2], [191, 158], [192, 159], [184, 158], [185, 160, 2], [186, 161], [182, 160], [188, 162, 2],
  [192, 163, 2, 2], [181, 165], [182, 166, 3], [182, 167], [185, 164], [189, 161], [180, 163, 1, 2],
];

const middle: Rect[] = [
  [73, 11], [77, 11], [74, 12, 4, 2], [75, 14, 2, 2], [63, 27, 2], [65, 28, 2], [66, 41, 2], [69, 40], [70, 41, 3], [71, 39], [73, 42],
  [75, 40, 2], [71, 43], [68, 42], [82, 38], [89, 47], [105, 46], [106, 47], [42, 44, 2], [43, 46], [45, 48], [43, 50], [47, 45, 1, 3], [44, 49],
  [25, 49], [24, 51], [26, 50, 2], [28, 49], [29, 51, 2], [24, 55], [21, 57], [22, 58, 2], [24, 57], [28, 54], [27, 57], [29, 59], [32, 56, 2],
  [38, 56], [44, 57], [27, 61], [20, 59, 3], [30, 60], [57, 53], [59, 52], [71, 51, 2], [73, 52, 4], [76, 51], [78, 54], [74, 57], [77, 61],
  [85, 58], [87, 61], [87, 66], [103, 54], [105, 68], [113, 56], [115, 57, 3], [118, 56], [51, 66], [160, 65, 3], [161, 66], [173, 58, 2], [172, 59, 3],
  [258, 69, 2], [252, 75, 2], [272, 67, 2, 2], [219, 81], [37, 79, 2, 5], [38, 78, 1, 8], [39, 80, 1, 4],
  [48, 81], [57, 75], [59, 79], [64, 78, 2], [68, 76], [74, 81], [58, 90], [80, 91], [95, 78], [103, 76], [101, 80, 3], [110, 82], [103, 78],
  [107, 87], [104, 91], [122, 82], [125, 77], [131, 85, 2], [137, 88], [146, 89], [152, 88], [155, 89], [140, 96],
  [43, 99], [44, 101, 1, 3], [45, 102, 1, 2], [48, 104], [29, 109], [28, 110], [42, 119], [54, 114], [58, 111], [65, 110, 2, 2], [67, 105],
  [73, 106], [86, 107], [85, 120], [78, 118], [79, 123], [83, 127, 2], [75, 130], [115, 103], [117, 102], [119, 101], [120, 102], [123, 99],
  [125, 102, 2], [121, 101], [127, 102], [105, 110, 2], [106, 113], [104, 114, 3], [103, 115, 2], [102, 117, 1, 2], [101, 120, 2], [100, 124, 2],
  [105, 125, 1, 3], [104, 127], [103, 129, 2], [102, 130, 3, 2], [135, 113, 3, 4], [136, 110, 1, 3], [135, 112, 3], [140, 113], [141, 115],
  [143, 117], [145, 118], [130, 136], [132, 137], [134, 135], [133, 134], [136, 134], [138, 132, 2], [139, 128], [143, 134],
  [63, 127], [62, 128, 3], [62, 130, 1, 3], [64, 133], [65, 134, 2], [66, 131, 1, 2], [67, 130, 4, 3], [65, 128, 1, 3], [59, 133], [58, 134],
  [50, 143], [53, 143], [107, 145, 8], [108, 144, 8, 3], [112, 143, 2], [110, 147, 3], [118, 147],
  [81, 165, 4], [80, 166, 5], [79, 167, 12, 4], [81, 171, 5], [88, 166], [90, 167, 4, 3], [72, 171, 4], [74, 170],
  [169, 165, 2], [170, 166, 3], [171, 167, 5], [171, 168, 6, 2], [173, 170, 3],
];

const south: Rect[] = [
  [59, 31, 4, 4], [61, 30, 2], [60, 35, 2], [90, 31], [100, 31], [68, 43], [67, 45, 2], [70, 44], [75, 50, 4], [74, 51, 8], [75, 52, 8, 2],
  [77, 54, 7], [79, 56, 4], [26, 48, 2, 14], [28, 50, 2, 6], [30, 52, 1, 3], [30, 46], [29, 47], [31, 45], [41, 41], [36, 46, 8], [35, 47, 10, 2], [38, 45, 3],
  [40, 49, 6], [30, 50], [32, 49, 2], [33, 51, 2], [36, 50], [38, 51, 2], [31, 53, 2], [34, 54, 2], [37, 53], [39, 54, 2], [42, 52, 2], [44, 53], [46, 51],
  [47, 50], [30, 55], [29, 57, 2], [32, 56], [35, 56, 1, 2], [38, 57, 2], [41, 56], [43, 55], [46, 55, 2], [28, 60], [31, 58, 2], [33, 60], [36, 59],
  [39, 58], [40, 60], [42, 58], [47, 56], [91, 47], [92, 46], [94, 46], [92, 49], [95, 48], [98, 48], [99, 47], [104, 49], [106, 53], [108, 51],
  [107, 52], [100, 55], [100, 57], [106, 56], [95, 67], [98, 66], [97, 71], [102, 67, 2, 2], [103, 66], [102, 72, 2],
  [80, 72], [79, 74, 3, 3], [78, 77, 2], [80, 77, 2], [118, 77], [115, 79], [115, 82], [113, 81], [116, 84], [41, 86, 2], [44, 86], [43, 85], [48, 86],
  [53, 88, 5], [55, 87], [55, 89, 3], [78, 89, 6], [77, 90, 7, 2], [78, 92, 7, 2], [80, 94, 4], [82, 95, 3], [88, 95], [82, 97], [87, 99], [93, 98],
  [89, 102], [86, 88], [99, 89], [99, 91], [100, 94, 1, 4], [100, 98, 2], [99, 101, 2], [104, 87], [104, 91], [100, 89, 1, 3],
  [108, 92, 2, 4], [110, 91, 2], [110, 94], [113, 93, 2], [112, 90], [12, 109, 4, 2], [10, 114], [14, 115], [75, 108], [68, 114], [58, 124],
  [54, 128, 2, 2], [53, 129, 3], [76, 120], [82, 121], [77, 123], [78, 128], [87, 126], [90, 130], [77, 133], [88, 134], [87, 137], [65, 138],
  [72, 139], [72, 144], [85, 140], [93, 141], [96, 141], [88, 148], [90, 151], [93, 155],
];

const toPath = (rects: Rect[]) => rects.map(([x, y, w = 1, h = 1]) => `M${x} ${y}h${w}v${h}h${-w}z`).join("");

function MapCanvas() {
  return (
    <main className="flex min-w-0 grow items-center justify-center overflow-hidden border-l border-[#b0b0b0] bg-white">
      <svg width="389" height="485" viewBox="0 0 389 485" className="shrink-0" shapeRendering="crispEdges" role="img" aria-label="Map">
        <rect width="389" height="485" fill="#000" />
        <g fill="#fff">
          <path transform="translate(112 -2)" d={toPath(north)} />
          <path transform="translate(32 168)" d={toPath(middle)} />
          <path transform="translate(32 318)" d={toPath(south)} />
        </g>
      </svg>
    </main>
  );
}

/* ---------- status bar ---------- */

function Spin({ id, label, value }: { id: string; label: string; value: string }) {
  return (
    <span className="flex items-center gap-1">
      <label htmlFor={id}>{label}</label>
      <span className="flex h-5 w-[83px] rounded-sm border border-[#a8a8a8] bg-white">
        <input id={id} defaultValue={value} className="min-w-0 grow px-1 outline-none" />
        <span className="flex w-3 flex-col justify-center border-l border-[#a8a8a8] bg-[#f7f7f7]">
          <button aria-label={`Increase ${label}`} className="flex h-2 items-center justify-center"><Tri dir="up" /></button>
          <button aria-label={`Decrease ${label}`} className="flex h-2 items-center justify-center"><Tri /></button>
        </span>
      </span>
    </span>
  );
}

function StatusBar() {
  return (
    <footer className="flex h-[28px] shrink-0 items-center border-t border-[#b0b0b0] bg-[#f0f0f0] pt-0.5 pl-[3px] font-['DejaVu_Sans_Condensed','DejaVu_Sans',sans-serif] text-[11px] leading-4 whitespace-nowrap">
      <label className="flex h-[22px] w-[200px] shrink-0 items-center gap-1.5 rounded-sm border border-[#a8a8a8] bg-white px-2">
        <svg width="13" height="13" fill="none" stroke="#888" className="shrink-0" aria-hidden="true">
          <circle cx="5" cy="5" r="4" />
          <path d="M8 8l4.500 4.500" strokeWidth="1.500" />
        </svg>
        <input aria-label="Locator" placeholder="Type to locate (Ctrl+K)" className="min-w-0 grow outline-none placeholder:text-[#858585]" />
      </label>
      <span className="ml-[7px] w-[68px] shrink-0 overflow-hidden">Updated local</span>
      <label htmlFor="coord" className="ml-2">Coordinate</label>
      <input id="coord" defaultValue="27.448,-26.182" className="ml-1 h-[22px] w-[91px] rounded-sm border border-[#a8a8a8] bg-white px-1.5" />
      <button aria-label="Toggle extents" className="mr-[3px] ml-1 flex">
        <svg width="17" height="18" viewBox="0 0 17 18" fill="none" stroke="#333" aria-hidden="true">
          <path d="M2 3l4-2 5 6-4 4zM3 6l5-3M5 8l4-4M8 10l5 4-3 3-4-4zM11 5l5-3M12 8l3 2M2 5l6 5M4 3l6 5" />
          <circle cx="5" cy="5" r="3.500" />
          <circle cx="10" cy="14" r="3" />
        </svg>
      </button>
      <label htmlFor="scale" className="ml-2">Scale</label>
      <span className="relative ml-[3px] flex h-[22px] w-[81px] shrink-0 rounded-sm border border-[#a8a8a8] bg-white">
        <select id="scale" className="w-full appearance-none pl-[3px] outline-none">
          <option>1:381707</option>
        </select>
        <span className="pointer-events-none absolute inset-y-0 right-0 flex w-5 items-center justify-center border-l border-[#a8a8a8] bg-[#f7f7f7]">
          <Tri />
        </span>
      </span>
      <button aria-label="Lock scale" className="mr-2 ml-3 flex">
        <svg width="12" height="15" fill="none" aria-hidden="true">
          <path d="M3 7V4.500a3 3 0 016 0V7" stroke="#888" strokeWidth="1.600" />
          <rect y="7" width="12" height="8" rx="1" fill="#555" />
        </svg>
      </button>
      <Spin id="mag" label="Magnifier" value="100%" />
      <span className="w-2" />
      <Spin id="rot" label="Rotation" value="0.0 °" />
      <span className="w-2" />
      <Check id="render" label="Render" />
      <button className="ml-auto flex items-center gap-0.5">
        <svg width="15" height="15" viewBox="0 0 15 15" fill="none" stroke="#666" aria-hidden="true">
          <circle cx="7.500" cy="7.500" r="6.500" fill="#999" />
          <path d="M1 7.500h13M7.500 1v13M2 4h11M2 11h11" stroke="#ddd" strokeWidth=".7" />
          <ellipse cx="7.500" cy="7.500" rx="3.500" ry="6.500" />
        </svg>
        EPSG:4326
      </button>
      <button aria-label="Messages" className="mr-[13px] ml-6">
        <svg width="17" height="15" viewBox="0 0 17 15" aria-hidden="true">
          <path d="M8 0c5 0 8 2.500 8 5.800 0 2-1 3.400-2.500 4.400L15 14l-5-2.500C4 12 0 10 0 6 0 2.500 3.500 0 8 0z" fill="#555" />
          <path d="M4 5h2v2H4zM7 5h2v2H7zM10 5h2v2h-2z" fill="#fff" />
        </svg>
      </button>
      <svg width="11" height="11" className="mr-1 self-end" aria-hidden="true">
        <path d="M9 0h1v1H9zM6 3h1v1H6zM9 3h1v1H9zM3 6h1v1H3zM6 6h1v1H6zM9 6h1v1H9zM0 9h1v1H0zM3 9h1v1H3zM6 9h1v1H6zM9 9h1v1H9z" fill="#aaa" />
      </svg>
    </footer>
  );
}

/* ---------- window ---------- */

// text before the mnemonic, the underlined letter, text after it
const menus = [
  ["Pro", "j", "ect"],
  ["", "E", "dit"],
  ["", "V", "iew"],
  ["", "L", "ayer"],
  ["", "S", "ettings"],
  ["", "P", "lugins"],
  ["Vect", "o", "r"],
  ["", "R", "aster"],
  ["", "D", "atabase"],
  ["", "W", "eb"],
  ["", "M", "esh"],
  ["Pro", "c", "essing"],
  ["", "H", "elp"],
];

export default function App() {
  return (
    <div className="flex h-screen flex-col overflow-hidden border-2 border-black bg-[#f0f0f0] font-['Lato','Open_Sans',sans-serif] text-[12px] text-black">
      <header className="flex h-[29px] shrink-0 items-center bg-[#0063b1] text-white">
        <Svg size={17} className="mr-[5px] ml-1.5">
          <path d="M12 1a11 11 0 107 19.500L15.500 17A6.500 6.500 0 1118 11l4.500 4A11 11 0 0012 1z" fill="#589632" />
          <path d="M11 11h5l7 7v5h-4l-8-8z" fill="#93b023" />
          <path d="M11 10l6 1-5 5z" fill="#ee7913" />
        </Svg>
        <h1 className="grow">*Untitled Project — QGIS [New1]</h1>
        <button aria-label="Minimize" className="flex h-full w-[46px] items-center justify-center">
          <svg width="10" height="10" aria-hidden="true"><path d="M0 5h10v1H0z" fill="#fff" /></svg>
        </button>
        <button aria-label="Maximize" className="flex h-full w-[46px] items-center justify-center">
          <svg width="10" height="10" fill="none" stroke="#fff" aria-hidden="true"><path d="M.5 .5h9v9h-9z" /></svg>
        </button>
        <button aria-label="Close" className="flex h-full w-[46px] items-center justify-center">
          <svg width="10" height="10" fill="none" stroke="#fff" aria-hidden="true"><path d="M0 0l10 10M10 0L0 10" /></svg>
        </button>
      </header>
      <nav className="flex h-5 shrink-0 items-center border-b border-[#d4d4d4] pl-0.5">
        {menus.map(([before, key, after]) => (
          <button key={before + key + after} className="px-[7px]">
            {before}
            <u className="underline-offset-2">{key}</u>
            {after}
          </button>
        ))}
      </nav>
      <Toolbar items={mainTools} label="Main tools" overflow />
      <Toolbar items={editTools} label="Layer tools" />
      <div className="flex min-h-0 grow">
        <aside className="flex w-64 shrink-0 flex-col">
          <BrowserPanel />
          <div className="flex h-1.5 shrink-0 items-center justify-center">
            <div className="h-px w-[17px] border-t border-dotted border-[#999]" />
          </div>
          <LayersPanel />
        </aside>
        <div className="flex w-1.5 shrink-0 items-center justify-center">
          <div className="h-[17px] border-l border-dotted border-[#999]" />
        </div>
        <MapCanvas />
      </div>
      <StatusBar />
    </div>
  );
}
